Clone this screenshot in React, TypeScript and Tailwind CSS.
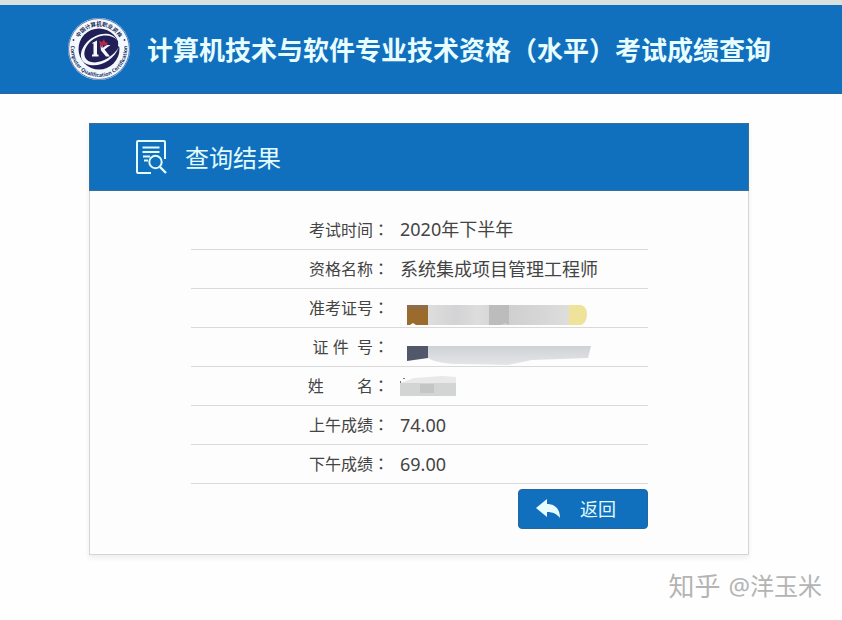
import type { ReactNode } from "react";

const Logo = () => (
  <svg viewBox="0 0 64 64" className="h-16 w-16 shrink-0" role="img" aria-label="中国计算机技术资格">
    <defs>
      <path id="arc-top" d="M9 32a23 23 0 0 1 46 0" />
      <path id="arc-bottom" d="M4.2 27a28.2 28.2 0 1 0 55.6 0" />
    </defs>
    <circle cx="32" cy="32" r="31" fill="#f4f9ff" />
    <circle cx="32" cy="32" r="30.4" fill="none" stroke="#33599a" strokeWidth="0.8" />
    <circle cx="32" cy="32" r="20.5" fill="#211f55" />
    <text fill="#202b50" fontSize="5.4" fontWeight="700" textAnchor="middle">
      <textPath href="#arc-top" startOffset="50%">
        中国计算机职业资格
      </textPath>
    </text>
    <text fill="#26375f" fontSize="5.2" fontWeight="700" textAnchor="middle">
      <textPath href="#arc-bottom" startOffset="50%">
        Computer Qualification Certification
      </textPath>
    </text>
    <circle cx="6.5" cy="23" r="0.9" fill="#26375f" />
    <circle cx="57.5" cy="23" r="0.9" fill="#26375f" />
    {/* orbit */}
    <path
      d="M50 23C44 16 30 17 22 26c-7 8-6 17 2 19 9 2 21-4 28-15-5 13-18 20-29 18-11-2-12-13-3-23 9-9 24-12 30-2z"
      fill="#f4f9ff"
    />
    <path d="M49 16q6 6 5 15l-3-2q1-6-2-13z" fill="#f4f9ff" />
    {/* K mark */}
    <path d="M25 26l5-2.500v14h1.500v2h-6.500v-2h1.500v-11H25z" fill="#f4f9ff" />
    <path d="M33 26h2.500v5l4-3h4l-6 4.500 5.500 7h-4l-5-6z" fill="#f4f9ff" />
    <path d="M32 24l3 1 2-3 1 3 3 1-2 3-3-1-2 3z" fill="#b3284b" />
  </svg>
);

const SearchDocIcon = () => (
  <svg
    viewBox="0 0 32 36"
    className="h-9 w-8 shrink-0"
    fill="none"
    stroke="#e2fcff"
    strokeWidth="2"
    aria-hidden="true"
  >
    <path d="M16 34H3a1 1 0 0 1-1-1V3a1 1 0 0 1 1-1h26a1 1 0 0 1 1 1v17" />
    <path d="M7.500 8.500h17M7.500 13h17M8 17.500h7M9 21.500h4" />
    <circle cx="20.500" cy="23" r="6.200" />
    <path d="M25 28l6 6" strokeWidth="2.4" />
  </svg>
);

const TicketMask = () => (
  <svg viewBox="0 0 200 38" className="block h-[38px] w-[200px]" aria-hidden="true">
    <defs>
      <linearGradient id="ticket">
        <stop offset="0" stopColor="#dedede" />
        <stop offset="0.2" stopColor="#d3d3d5" />
        <stop offset="0.35" stopColor="#dddddd" />
        <stop offset="0.55" stopColor="#cfcfcf" />
        <stop offset="0.8" stopColor="#d6d6d7" />
        <stop offset="1" stopColor="#dededc" />
      </linearGradient>
    </defs>
    <path d="M28 16h142v20H28z" fill="url(#ticket)" />
    <path d="M7 16h21v20H16l-3-2-3 2H7z" fill="#9b6b2d" />
    <path d="M7 16h21v4H7z" fill="#8e6e4a" />
    <path d="M89 16h20v20l-4-2-4 2H89z" fill="#bcbcbc" />
    <path d="M169 16h12q6 2 6 9 0 9-6 11h-12z" fill="#efe39b" />
  </svg>
);

const IdMask = () => (
  <svg viewBox="0 0 200 38" className="block h-[38px] w-[200px]" aria-hidden="true">
    <defs>
      <linearGradient id="idcard" x2="0" y2="1">
        <stop offset="0" stopColor="#cfd2d5" />
        <stop offset="1" stopColor="#e4e5e8" />
      </linearGradient>
    </defs>
    <path d="M28 18h163l-3 12-56 2-24 5-46-1q-24 0-34-6z" fill="url(#idcard)" />
    <path d="M7 18h21v12L7 33z" fill="#52586c" />
  </svg>
);

const NameMask = () => (
  <svg viewBox="0 0 200 38" className="block h-[38px] w-[200px]" aria-hidden="true">
    <path d="M0 16l14-5 28-2 14 1v7H0z" fill="#e8e9e8" />
    <path d="M0 16h56v13H0z" fill="#d3d5d4" />
    <path d="M20 17h14v9H20z" fill="#c3c6c5" />
    <path d="M3 11h2v1H3zM0 14h1v2H0z" fill="#777" />
  </svg>
);

const rows: { label: string; value: ReactNode }[] = [
  { label: "考试时间", value: "2020年下半年" },
  { label: "资格名称", value: "系统集成项目管理工程师" },
  { label: "准考证号", value: <TicketMask /> },
  { label: "证 件  号", value: <IdMask /> },
  { label: "姓        名", value: <NameMask /> },
  { label: "上午成绩", value: "74.00" },
  { label: "下午成绩", value: "69.00" },
];

const App = () => {
  return (
    <div className="relative min-h-screen bg-[#fefefe] font-['Noto_Sans','Noto_Sans_CJK_SC',sans-serif] text-[#444]">
      {/* Header */}
      <header className="flex items-center gap-4 border-t-[5px] border-b border-t-[#d9e1e0] border-b-[#2c659b] bg-[#1170bd] pt-3 pr-4 pb-3 pl-[67px]">
        <Logo />
        <h1 className="text-[26px] leading-9 font-bold text-[#e8fdff]">
          计算机技术与软件专业技术资格
          <span className="font-['Noto_Sans_CJK_TC',sans-serif]">（</span>水平
          <span className="font-['Noto_Sans_CJK_TC',sans-serif]">）</span>
          考试成绩查询
        </h1>
      </header>

      <main className="pt-[29px] pr-[93px] pb-14 pl-[89px]">
        <section className="border border-t-0 border-[#d5d5d5] bg-[#fdfdfd] shadow-[0_3px_5px_#eeeeee]">
          <div className="-mx-px flex h-[68px] items-center gap-[18px] border border-[#3a6f98] bg-[#1170bd] pl-[45px]">
            <SearchDocIcon />
            <h2 className="pt-[2px] text-2xl text-[#e2fcff]">查询结果</h2>
          </div>

          {/* Results */}
          <div className="pt-[19px] pr-[100px] pb-[25px] pl-[101px]">
            <table className="w-full border-collapse">
              <tbody>
                {rows.map((row) => (
                  <tr key={row.label} className="h-[39px] border-b border-[#d9d9d9]">
                    <th
                      scope="row"
                      className="w-[198px] p-0 text-right text-base leading-6 font-normal whitespace-pre"
                    >
                      {row.label}
                      <span className="font-['Noto_Sans_CJK_TC',sans-serif]">：</span>
                    </th>
                    <td className="py-0 pr-0 pl-[11px] text-lg leading-6">{row.value}</td>
                  </tr>
                ))}
              </tbody>
            </table>

            <div className="mt-[5px] flex justify-end">
              <button
                type="button"
                className="flex h-10 w-[130px] items-center gap-5 rounded border border-[#2367a0] bg-[#1170bd] pl-[17px] text-lg text-[#e2fcff]"
              >
                <svg viewBox="0 0 24 20" className="h-5 w-6" fill="#e9fcff" aria-hidden="true">
                  <path d="M0 9L11 0v5c8 0 13 5 13 14-3-4-7-6-13-6v5z" />
                </svg>
                返回
              </button>
            </div>
          </div>
        </section>
      </main>

      {/* Watermark */}
      <div className="absolute right-5 bottom-4 flex items-center gap-2 leading-9 text-[#b4b4b4]">
        <span className="text-[26px]">知乎</span>
        <span className="text-2xl">@洋玉米</span>
      </div>
    </div>
  );
};

export default App;
